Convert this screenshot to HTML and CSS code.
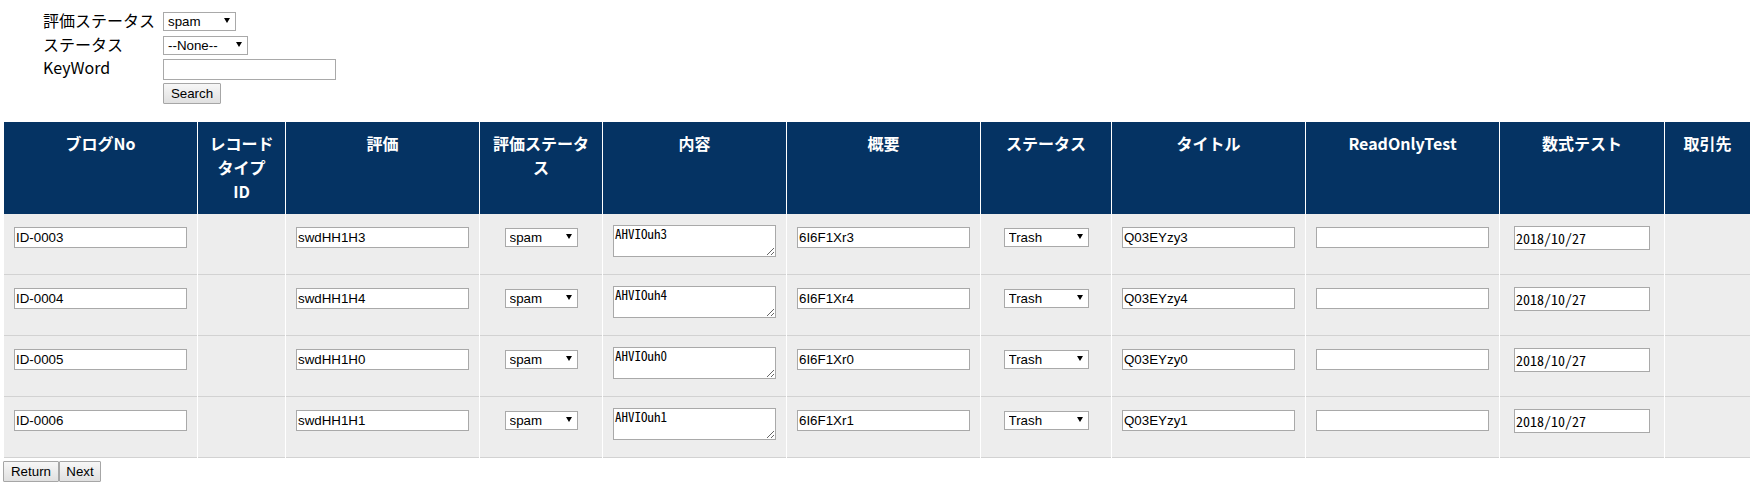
FILE: index.html
```html
<!DOCTYPE html>
<html lang="ja">
<head>
<meta charset="utf-8">
<title>ブログ一覧</title>
<link rel="stylesheet" href="styles.css">
</head>
<body>
<form class="search">
  <span class="lbl">評価ステータス</span>
  <span class="sel w73"><select><option>spam</option></select></span>
  <span class="lbl">ステータス</span>
  <span class="sel w85"><select><option>--None--</option></select></span>
  <span class="lbl">KeyWord</span>
  <input class="kw" type="text" value="">
  <span></span>
  <button class="btn search-btn" type="button">Search</button>
</form>

<table class="grid">
  <colgroup>
    <col class="c1"><col class="c2"><col class="c3"><col class="c4"><col class="c5"><col class="c6">
    <col class="c7"><col class="c8"><col class="c9"><col class="c10"><col class="c11">
  </colgroup>
  <thead>
    <tr>
      <th><div class="h">ブログNo</div></th>
      <th><div class="h">レコード<br>タイプ<br>ID</div></th>
      <th><div class="h">評価</div></th>
      <th><div class="h">評価ステータ<br>ス</div></th>
      <th><div class="h">内容</div></th>
      <th><div class="h">概要</div></th>
      <th><div class="h">ステータス</div></th>
      <th><div class="h">タイトル</div></th>
      <th><div class="h">ReadOnlyTest</div></th>
      <th><div class="h">数式テスト</div></th>
      <th><div class="h">取引先</div></th>
    </tr>
  </thead>
  <tbody>
    <tr>
      <td><div class="cell"><input class="txt" type="text" value="ID-0003"></div></td>
      <td><div class="cell"></div></td>
      <td><div class="cell"><input class="txt" type="text" value="swdHH1H3"></div></td>
      <td><div class="cell mid"><span class="sel w73"><select><option>spam</option></select></span></div></td>
      <td><div class="cell"><textarea class="ta">AHVIOuh3</textarea></div></td>
      <td><div class="cell"><input class="txt" type="text" value="6I6F1Xr3"></div></td>
      <td><div class="cell mid"><span class="sel w85"><select><option>Trash</option></select></span></div></td>
      <td><div class="cell"><input class="txt" type="text" value="Q03EYzy3"></div></td>
      <td><div class="cell"><input class="txt" type="text" value=""></div></td>
      <td><div class="cell mid"><input class="date" type="text" value="2018/10/27"></div></td>
      <td><div class="cell"></div></td>
    </tr>
    <tr>
      <td><div class="cell"><input class="txt" type="text" value="ID-0004"></div></td>
      <td><div class="cell"></div></td>
      <td><div class="cell"><input class="txt" type="text" value="swdHH1H4"></div></td>
      <td><div class="cell mid"><span class="sel w73"><select><option>spam</option></select></span></div></td>
      <td><div class="cell"><textarea class="ta">AHVIOuh4</textarea></div></td>
      <td><div class="cell"><input class="txt" type="text" value="6I6F1Xr4"></div></td>
      <td><div class="cell mid"><span class="sel w85"><select><option>Trash</option></select></span></div></td>
      <td><div class="cell"><input class="txt" type="text" value="Q03EYzy4"></div></td>
      <td><div class="cell"><input class="txt" type="text" value=""></div></td>
      <td><div class="cell mid"><input class="date" type="text" value="2018/10/27"></div></td>
      <td><div class="cell"></div></td>
    </tr>
    <tr>
      <td><div class="cell"><input class="txt" type="text" value="ID-0005"></div></td>
      <td><div class="cell"></div></td>
      <td><div class="cell"><input class="txt" type="text" value="swdHH1H0"></div></td>
      <td><div class="cell mid"><span class="sel w73"><select><option>spam</option></select></span></div></td>
      <td><div class="cell"><textarea class="ta">AHVIOuh0</textarea></div></td>
      <td><div class="cell"><input class="txt" type="text" value="6I6F1Xr0"></div></td>
      <td><div class="cell mid"><span class="sel w85"><select><option>Trash</option></select></span></div></td>
      <td><div class="cell"><input class="txt" type="text" value="Q03EYzy0"></div></td>
      <td><div class="cell"><input class="txt" type="text" value=""></div></td>
      <td><div class="cell mid"><input class="date" type="text" value="2018/10/27"></div></td>
      <td><div class="cell"></div></td>
    </tr>
    <tr>
      <td><div class="cell"><input class="txt" type="text" value="ID-0006"></div></td>
      <td><div class="cell"></div></td>
      <td><div class="cell"><input class="txt" type="text" value="swdHH1H1"></div></td>
      <td><div class="cell mid"><span class="sel w73"><select><option>spam</option></select></span></div></td>
      <td><div class="cell"><textarea class="ta">AHVIOuh1</textarea></div></td>
      <td><div class="cell"><input class="txt" type="text" value="6I6F1Xr1"></div></td>
      <td><div class="cell mid"><span class="sel w85"><select><option>Trash</option></select></span></div></td>
      <td><div class="cell"><input class="txt" type="text" value="Q03EYzy1"></div></td>
      <td><div class="cell"><input class="txt" type="text" value=""></div></td>
      <td><div class="cell mid"><input class="date" type="text" value="2018/10/27"></div></td>
      <td><div class="cell"></div></td>
    </tr>
  </tbody>
</table>

<div class="pager">
  <button class="btn ret" type="button">Return</button><button class="btn nxt" type="button">Next</button>
</div>
</body>
</html>
```

FILE: styles.css
```css
html, body {
  margin: 0;
  padding: 0;
  background: #ffffff;
}

body {
  color: #000000;
  font-family: "Noto Sans CJK JP", "Liberation Sans", sans-serif;
}

/* ---------- search form ---------- */
.search {
  display: grid;
  grid-template-columns: 120px auto;
  grid-template-rows: 24px 23px 24px 21px;
  justify-items: start;
  align-items: start;
  margin: 12px 0 0 43px;
}

.lbl {
  font-size: 16px;
  line-height: 16px;
  white-space: nowrap;
}

.kw {
  box-sizing: border-box;
  width: 173px;
  height: 21px;
  margin: 0;
  padding: 0 1px;
  border: 1px solid #a9a9a9;
  background: #fff;
  font-family: "Liberation Sans", Arial, sans-serif;
  font-size: 13.333px;
}

/* ---------- select look-alike ---------- */
.sel {
  position: relative;
  display: inline-block;
  height: 19px;
}
.sel.w73 { width: 73px; }
.sel.w85 { width: 85px; }

.sel select {
  box-sizing: border-box;
  display: block;
  width: 100%;
  height: 100%;
  margin: 0;
  padding: 0 0 0 4px;
  border: 1px solid #a9a9a9;
  border-radius: 0;
  background: #fff;
  color: #000;
  -webkit-appearance: none;
  appearance: none;
  font-family: "Liberation Sans", Arial, sans-serif;
  font-size: 13.333px;
  line-height: 17px;
}

.sel::after {
  content: "";
  position: absolute;
  right: 6px;
  top: 6px;
  width: 0;
  height: 0;
  border-left: 3px solid transparent;
  border-right: 3px solid transparent;
  border-top: 5px solid #000;
  pointer-events: none;
}

/* ---------- buttons ---------- */
.btn {
  box-sizing: border-box;
  height: 21px;
  margin: 0;
  padding: 0;
  border: 1px solid #a6a6a6;
  border-radius: 1px;
  background: linear-gradient(#f7f7f7, #e0e0e0);
  color: #000;
  font-family: "Liberation Sans", Arial, sans-serif;
  font-size: 13.333px;
  line-height: 19px;
  text-align: center;
}
.search-btn { width: 58px; }

/* ---------- grid table ---------- */
.grid {
  table-layout: fixed;
  width: 1748px;
  margin: 18px 0 0 3px;
  border-collapse: separate;
  border-spacing: 1px 0;
}

.grid col.c1 { width: 193px; }
.grid col.c2 { width: 87px; }
.grid col.c3 { width: 193px; }
.grid col.c4 { width: 122px; }
.grid col.c5 { width: 183px; }
.grid col.c6 { width: 193px; }
.grid col.c7 { width: 130px; }
.grid col.c8 { width: 193px; }
.grid col.c9 { width: 193px; }
.grid col.c10 { width: 164px; }
.grid col.c11 { width: 85px; }

.grid th {
  padding: 0;
  vertical-align: top;
  background: #053363;
  color: #ffffff;
  font-weight: bold;
}

.grid th .h {
  padding: 9px 10px 11px;
  font-size: 16px;
  line-height: 24px;
  text-align: center;
}

.grid td {
  padding: 0;
  vertical-align: top;
  background: #ededed;
}

.cell {
  box-sizing: border-box;
  display: flow-root;
  height: 61px;
  padding: 0 10px;
  border-bottom: 1px solid #d2d2d2;
}

.cell.mid {
  display: flex;
  justify-content: center;
  align-items: flex-start;
}

.cell .txt {
  box-sizing: border-box;
  display: block;
  width: 100%;
  height: 21px;
  margin: 13px 0 0;
  padding: 0 1px;
  border: 1px solid #a9a9a9;
  background: #fff;
  color: #000;
  font-family: "Liberation Sans", Arial, sans-serif;
  font-size: 13.333px;
}

.cell .ta {
  box-sizing: border-box;
  display: block;
  width: 100%;
  height: 32px;
  margin: 11px 0 0;
  padding: 0 1px;
  border: 1px solid #a9a9a9;
  background: #fff;
  color: #000;
  font-family: "Noto Sans Mono CJK JP", "Liberation Mono", monospace;
  font-size: 13px;
  line-height: 16px;
}

.cell .sel {
  margin-top: 14px;
}

.cell .date {
  box-sizing: border-box;
  display: block;
  width: 136px;
  height: 24px;
  margin: 12px 0 0;
  padding: 0 1px;
  border: 1px solid #a9a9a9;
  background: #fff;
  color: #000;
  font-family: "Noto Sans Mono CJK JP", "Liberation Mono", monospace;
  font-size: 14px;
}

/* ---------- pager ---------- */
.pager {
  display: flex;
  margin: 3px 0 0 3px;
}
.ret { width: 56px; }
.nxt { width: 42px; }
```
